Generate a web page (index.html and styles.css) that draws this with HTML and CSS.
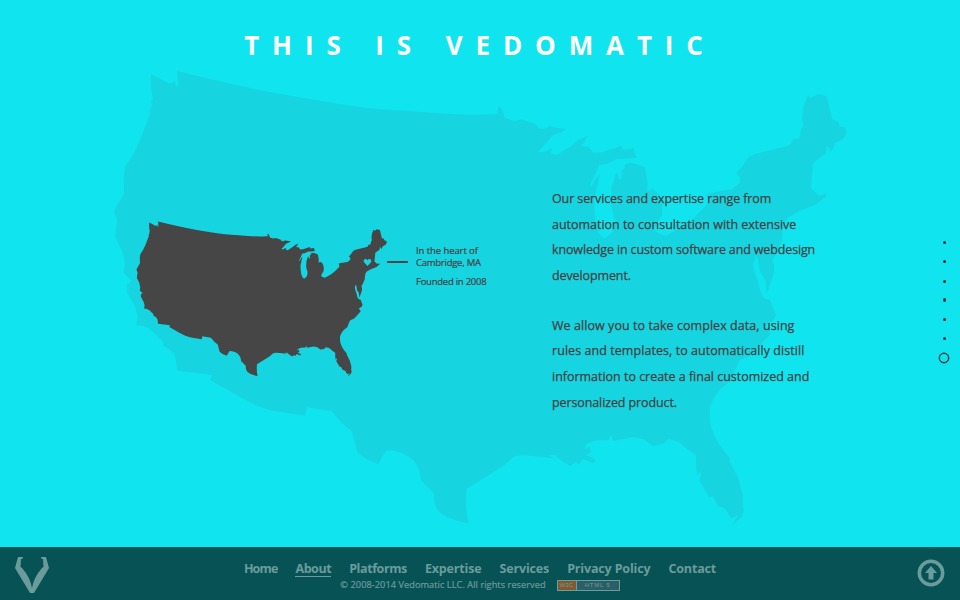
FILE: index.html
```html
<!DOCTYPE html>
<html lang="en">
<head>
<meta charset="utf-8">
<title>Vedomatic</title>
<link rel="stylesheet" href="styles.css">
</head>
<body>
<svg class="backdrop" viewBox="0 0 960 600" aria-hidden="true">
  <defs>
    <path id="usa" d="M151 74L158.300 77.700L170 84L172.700 82.700L175.300 80.700V84L178 87.700L177.300 71Q205 78 233.300 84.300T286.700 95T340 104T390 109.700T440 113.300T497.300 114L498 107.300L500.700 107L503 112.700L504.700 117.700L515 121L521.700 119.300L535 124L539 128.300L545 128.700L550 125.700L553.300 127.300L566 128.700L561.700 132L551.700 136L543.300 146.700L537.700 152H543.300L552.300 148L550.700 153.300L556.700 155L570 146.700L578.300 140L587.700 135.700L584.300 141.700L580.700 146L588.300 146.700L593.300 152.700L601.700 152.300L621.700 145.700L622.700 150L634 148.300L635 154.300L637 157.700L626.700 158.700L616.700 159L606.700 164L599.300 165L595 175L590 185L590.700 187.300L596 178.300L600 174L596.700 188.300L594 200L595 215Q596 230 601.700 236.700L605 238.300L611.700 232.700Q616 226 614 216.700L610.700 203.300L611.700 186.700L616 173.300L618 174L619 180L622 178L621 170.700L625 168.300L624 165L630 162.700L636.700 164.300L645 167.300L647.700 183.300L647 191.700L652.700 188.700L659.300 195L662.300 205L662 215L657.300 223L654.300 230L658.300 233.300L665.700 235.700L681.700 226.700L693.300 218.300L708.300 203.300L706 194L716.700 191.700L731.700 189.300L740 182.700L739.700 177.300L736 173.300L742.700 165.700L748.300 157.300L755 154L780 147.700L790 145L793.300 139L799 138.700L800.700 130L803.300 126L802 118.300L803.300 106.700L808 95L810.700 98L818.300 94L826.700 96L832.300 119.300L838.300 121.700L840 126.700L845 127.300L847 132.700L843.300 139.300L835 143.300L833.300 148.300L830 151.700L829.500 148L826.700 145.700L826 153.300L813.300 162.700L812 175L810.700 188.300L818.300 195L824 195L823 191.500L826.700 195.700L816.700 204L800 210.700L788.300 217.300L785 221.700L782.700 231.700L782.300 240L776.700 253.300L772.700 260L774.300 266.700L774 273.300L766.700 294.300L765 280L760 272L757.500 258L755.500 256L753.300 264L755 273L758 281L761 293L764 298L770 300L776 315L773.300 320.700L765 326L770.700 334L763.300 341.700L751.700 355L740 360L735.700 368.300L731.700 380L720 389.300L713.300 399.300L710 406.700L709.700 416.700Q710 427 715 436.700T730 458.300L729.300 460.700L738.300 478.300L743 495L742.700 507.300L744 510L741.700 516.700L732.300 525L738.300 515L731 518.300L725 508.300L717.700 506L712.700 496L709.300 497.300L699 480L701 473.300L698.700 471.700L697.700 476.700L696 468.300L695.700 455L688.300 450L678.300 441.700L668.300 439L663.300 444L652.700 446L643.300 439L633.300 437.300L613.300 441L611 434.700L608.700 440L595 440.700L586.700 444L584 449.300L589.300 446.700L591 451.700L586.700 455L596 460L593.300 463.300L583.300 459L579 465L576 462L570 466L561.700 461L555 455H548.300L554.300 458.300L533.300 456.300Q519 454 513.300 457.300L503.300 466L466.700 488.700Q465 506 468.300 523.300Q456 521 446.700 516.700T434.300 503.300L433.700 493.300L420.700 480Q419 454 390 450.300Q386 450 384 454L378.300 464.300L366 459L357.300 452.300L351.700 431Q342 425 331.700 411.300L306.700 407.300L305 415.700L273.300 411L256.700 405.700L238 396L210 380L212 375L176.700 370.700Q177 363 175 356.700T163.300 346V341.700L151.700 330.700Q144 325 136 325.700L137.700 316.700L135 306.700L126.700 291.700V285L131.700 280.700L123.300 273.300L125 263.300L121.700 250L115 236.700L117 220L113.700 211.700L124 193.300L123.700 176.700L125 166.700Q134 155 140 140T150 113.300L149.500 110L152.300 105L150.700 101.700L153 99.300L151 90Z"/>
  </defs>
  <use href="#usa" class="map-large"/>
  <use href="#usa" class="map-small" transform="translate(97.600 197.250) scale(.3415)"/>
  <path class="map-heart" d="M367.500 266L364 262.300C362.500 259.500 366 257.800 367.500 260.300C369 257.800 372.500 259.500 371 262.300Z"/>
</svg>

<main class="page">
  <h1>THIS IS VEDOMATIC</h1>
  <div class="content">
    <div class="callout">
      <i class="pointer"></i>
      <div class="callout-text">
        <p><span class="lead">In the heart of</span><br>Cambridge, MA</p>
        <p>Founded in 2008</p>
      </div>
    </div>
    <div class="copy">
      <p><span class="tight">Our services and expertise range from</span><br>automation to consultation with extensive<br><span class="tighter">knowledge in custom software and webdesign</span><br><span class="tight">development.</span></p>
      <p><span class="wide">We allow you to take complex data, using</span><br><span class="wide">rules and templates, to automatically distill</span><br>information to create a final customized and<br><span class="tight">personalized product.</span></p>
    </div>
    <nav class="dots" aria-label="Sections">
      <i></i><i></i><i></i><i></i><i></i><i></i><i class="current"></i>
    </nav>
  </div>
</main>

<footer>
  <svg class="logo" viewBox="0 0 34 36"><path d="M3 0H8L7.500 2H6L5.500 10L7 11Q15 20 17 31Q19 20 27 11L28.500 10L28 2H26.500L26 0H31L34 11L19 36H15L0 11Z"/></svg>
  <div class="footer-main">
    <nav class="menu">
      <a class="narrow">Home</a><a class="active">About</a><a class="snug">Platforms</a><a>Expertise</a><a>Services</a><a>Privacy Policy</a><a>Contact</a>
    </nav>
    <div class="legal">
      <span class="copyright">© 2008-2014 Vedomatic LLC. All rights reserved</span>
      <span class="badge"><b>W3C</b><span>HTML 5</span></span>
    </div>
  </div>
  <svg class="top" viewBox="0 0 28 28"><circle cx="14" cy="14" r="11.700"/><path d="M14 7L20 14H16.500V20.500H11.500V14H8Z"/></svg>
</footer>
</body>
</html>
```

FILE: styles.css
```css
* { box-sizing: border-box; }

body {
  margin: 0;
  width: 960px;
  height: 600px;
  overflow: hidden;
  display: flex;
  flex-direction: column;
  background: #10e5ef;
  color: #464646;
  font-family: "Trebuchet MS", "Open Sans", sans-serif;
}

h1, p { margin: 0; }

.backdrop {
  position: absolute;
  inset: 0;
  width: 960px;
  height: 600px;
}
.map-large { fill: #17d5e0; }
.map-small { fill: #464646; }
.map-heart { fill: #17d5e0; }

.page {
  position: relative;
  height: 547px;
  padding-top: 26px;
}

h1 {
  color: #fff;
  font-size: 26px;
  line-height: 38px;
  letter-spacing: 12.900px;
  word-spacing: 2px;
  text-align: center;
  white-space: pre;
}

.content {
  display: flex;
  align-items: flex-start;
  padding: 122px 11px 0 387px;
}

.callout {
  display: flex;
  gap: 8px;
  width: 165px;
  padding-top: 35px;
  color: #464042;
  font-size: 9.500px;
  line-height: 12px;
  letter-spacing: -.25px;
  white-space: nowrap;
  -webkit-text-stroke: .2px currentColor;
}
.callout .lead { letter-spacing: -.08px; }
.callout p + p { margin-top: 7px; }
.callout-text { padding-top: 24px; }
.pointer {
  width: 21px;
  height: 2px;
  margin-top: 40px;
  background: #464646;
}

.copy {
  width: 387px;
  color: #464042;
  font-size: 12.500px;
  line-height: 25.600px;
  letter-spacing: -.02px;
  white-space: nowrap;
  -webkit-text-stroke: .25px currentColor;
}
.copy p + p { margin-top: 24.500px; }
.copy .tight { letter-spacing: -.11px; }
.copy .tighter { letter-spacing: -.14px; }
.copy .wide { letter-spacing: .06px; }

.dots {
  display: flex;
  flex-direction: column;
  align-items: center;
  width: 10px;
  gap: 16.300px;
  padding-top: 55px;
}
.dots i {
  width: 3px;
  height: 3px;
  border-radius: 50%;
  background: #0b2c30;
}
.dots i:nth-child(4) { height: 4px; margin: -.5px 0; }
.dots .current {
  width: 10px;
  height: 10px;
  margin-top: -4px;
  border: 1px solid #0b2c30;
  box-shadow: 0 0 0 .4px #0b2c30;
  background: none;
}

footer {
  position: relative;
  display: flex;
  justify-content: space-between;
  height: 53px;
  padding: 0 15px;
  background: #075254;
  color: #6b9c9d;
}
.logo { width: 34px; height: 36px; margin-top: 10px; fill: #6b9c9d; }
.top { width: 28px; height: 28px; margin: 12px 0 0 6px; fill: #6b9c9d; }
.top circle { fill: none; stroke: #6b9c9d; stroke-width: 3.500; }

.footer-main { padding-top: 14px; }
.menu {
  display: flex;
  gap: 18px;
  font-size: 12.500px;
  font-weight: bold;
  line-height: 15px;
  letter-spacing: -.16px;
}
.menu .narrow { letter-spacing: -.85px; }
.menu .snug { letter-spacing: -.4px; }
.menu .active { height: 16px; border-bottom: 1px solid #6b9c9d; letter-spacing: -.45px; }

.legal {
  display: flex;
  justify-content: center;
  align-items: center;
  gap: 11px;
  margin-top: 2px;
  font-size: 9.200px;
  line-height: 12px;
  letter-spacing: .06px;
  white-space: nowrap;
}
.copyright { -webkit-text-stroke: .2px currentColor; }
.badge {
  display: flex;
  width: 63px;
  height: 11px;
  border: 1px solid #6b9c9d;
  font-family: "Liberation Sans", sans-serif;
  font-size: 6px;
  line-height: 9px;
  text-align: center;
}
.badge b { width: 19px; background: #825a2e; border-right: 1px solid #6b9c9d; font-weight: normal; }
.badge span { flex: 1; background: #2b5f67; letter-spacing: .8px; }
```
